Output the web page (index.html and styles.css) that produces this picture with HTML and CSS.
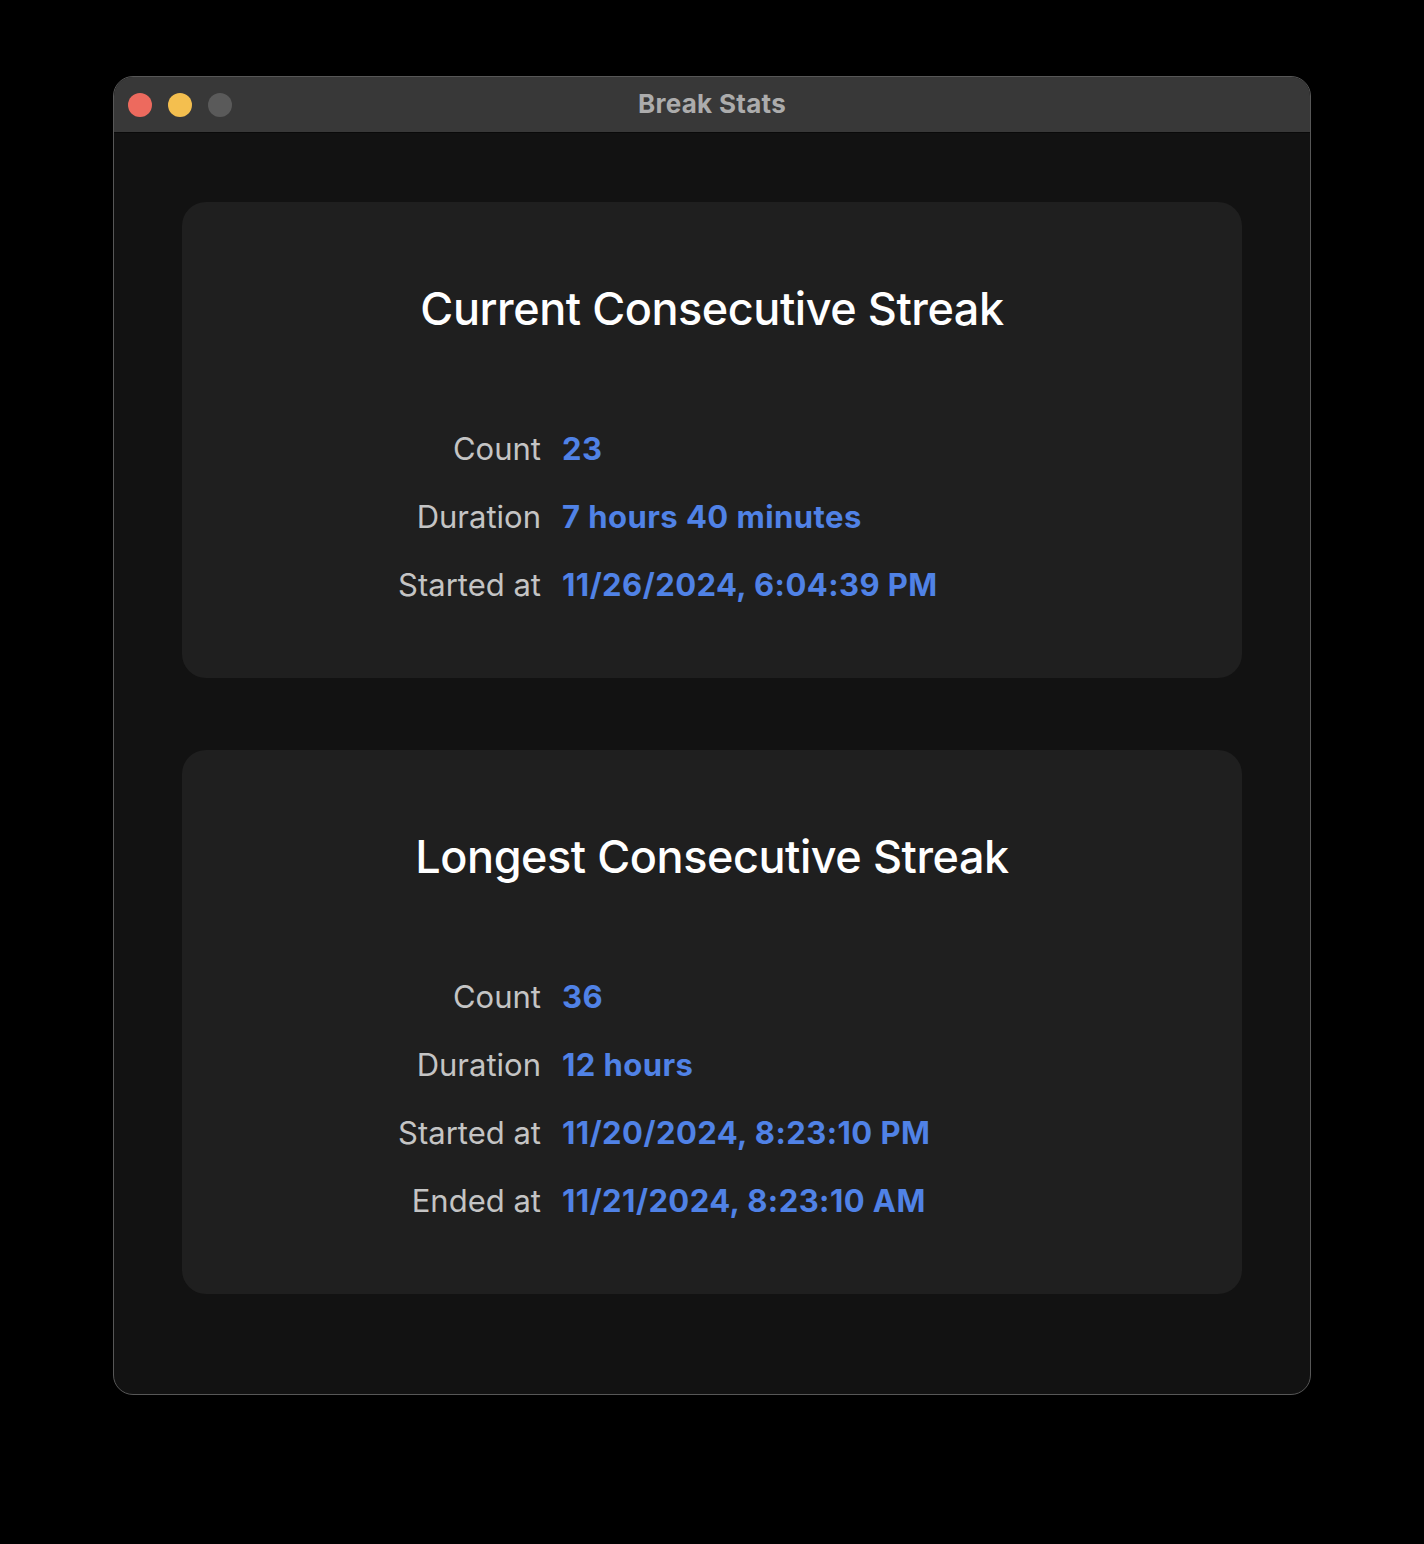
FILE: index.html
```html
<!DOCTYPE html>
<html>
<head>
<meta charset="utf-8">
<link rel="stylesheet" href="styles.css">
</head>
<body>
<div class="window">
  <div class="titlebar">
    <div class="lights">
      <span class="light red"></span>
      <span class="light yellow"></span>
      <span class="light gray"></span>
    </div>
    <div class="wtitle">Break Stats</div>
  </div>
  <div class="content">
    <section class="card">
      <h2 class="ctitle">Current Consecutive Streak</h2>
      <div class="rows">
        <div class="label">Count</div><div class="value">23</div>
        <div class="label">Duration</div><div class="value">7 hours 40 minutes</div>
        <div class="label">Started at</div><div class="value">11/26/2024, 6:04:39 PM</div>
      </div>
    </section>
    <section class="card">
      <h2 class="ctitle">Longest Consecutive Streak</h2>
      <div class="rows">
        <div class="label">Count</div><div class="value">36</div>
        <div class="label">Duration</div><div class="value">12 hours</div>
        <div class="label">Started at</div><div class="value">11/20/2024, 8:23:10 PM</div>
        <div class="label">Ended at</div><div class="value">11/21/2024, 8:23:10 AM</div>
      </div>
    </section>
  </div>
</div>
</body>
</html>
```
FILE: styles.css
```css
html, body {
  margin: 0;
  padding: 0;
  background: #000;
}
body {
  padding: 76px 0 0 113px;
  font-family: Inter, "Noto Sans", sans-serif;
}
.window {
  width: 1196px;
  height: 1317px;
  border: 1px solid #575757;
  border-radius: 20px;
  background: #121212;
  overflow: hidden;
}
.titlebar {
  position: relative;
  height: 55px;
  background: #383838;
  border-bottom: 1px solid #0a0a0a;
  display: flex;
  align-items: center;
}
.lights {
  display: flex;
  gap: 16px;
  padding-left: 14px;
}
.light {
  width: 24px;
  height: 24px;
  border-radius: 50%;
  display: block;
}
.red { background: #ed6a5e; }
.yellow { background: #f4bf4f; }
.gray { background: #5a5a5a; }
.wtitle {
  position: absolute;
  left: 0;
  right: 0;
  top: -1px;
  line-height: 55px;
  text-align: center;
  font-weight: 700;
  font-size: 26px;
  letter-spacing: 0.3px;
  color: #acacac;
  pointer-events: none;
}
.content {
  padding: 69px 68px 0 68px;
  display: flex;
  flex-direction: column;
  gap: 72px;
}
.card {
  background: #1f1f1f;
  border-radius: 24px;
  padding: 79px 0 59px;
}
.ctitle {
  margin: 0 0 78px;
  text-align: center;
  font-size: 45px;
  line-height: 56px;
  font-weight: 500;
  color: #fff;
  letter-spacing: -0.45px;
}
.rows {
  display: grid;
  grid-template-columns: 359px 1fr;
  column-gap: 21px;
}
.label, .value {
  line-height: 68px;
  font-size: 31px;
}
.label {
  text-align: right;
  color: #c4c4c4;
}
.value {
  color: #5082e6;
  font-weight: 700;
  letter-spacing: 0.45px;
}
```
